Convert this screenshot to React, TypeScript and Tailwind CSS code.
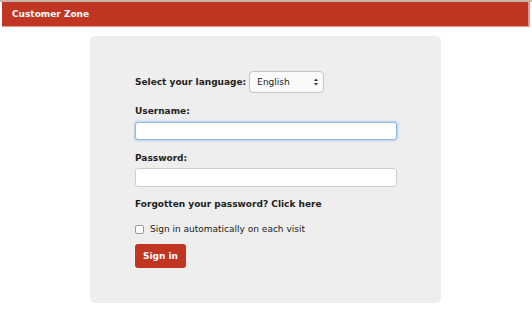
import React from 'react';

export default function App() {
  return (
    <div className="min-h-[314px] bg-white border-t-2 border-[#c8b6a6] font-['DejaVu_Sans',Verdana,sans-serif]">
      {/* Header bar */}
      <header className="mx-[2px] h-[25px] bg-[#c13523] border-b border-r-2 border-[#e59a8e] flex items-center px-[10px]">
        <span className="text-white text-[9px] font-bold leading-[12px]">Customer Zone</span>
      </header>

      {/* Login panel */}
      <div className="ml-[90px] mt-[9px] w-[351px] h-[267px] bg-[#eeeeee] rounded-[5px] pl-[45px] pt-[35px]">
        <div className="flex items-center h-[22px]">
          <label className="text-[9px] font-bold text-[#222] leading-[12px] mr-[3px]">Select your language:</label>
          <div className="w-[75px] h-[22px] bg-[#fafafa] border border-[#c4c4c4] rounded-[4px] flex items-center justify-between pl-[7px] pr-[4px]">
            <span className="text-[9px] text-[#222] leading-[12px]">English</span>
            <svg width="6" height="10" viewBox="0 0 6 10">
              <path d="M3 1.5 L5 4 H1 Z" fill="#333" />
              <path d="M3 8.5 L5 6 H1 Z" fill="#333" />
            </svg>
          </div>
        </div>

        <div className="mt-[12px] text-[9px] font-bold text-[#222] leading-[12px]">Username:</div>
        <div className="mt-[5px] w-[262px] h-[18px] bg-white border border-[#8fb8ea] rounded-[3px] shadow-[0_0_2px_1px_rgba(120,170,235,0.45)]" />

        <div className="mt-[12px] text-[9px] font-bold text-[#222] leading-[12px]">Password:</div>
        <div className="mt-[4px] w-[262px] h-[19px] bg-white border border-[#cfcfcf] rounded-[3px]" />

        <div className="mt-[11px] text-[9px] font-bold text-[#222] leading-[12px]">Forgotten your password? Click here</div>

        <div className="mt-[13px] flex items-center h-[12px]">
          <span className="w-[9px] h-[9px] bg-white border border-[#9a9a9a] rounded-[2px]" />
          <span className="ml-[6px] text-[9px] text-[#222] leading-[12px]">Sign in automatically on each visit</span>
        </div>

        <button className="mt-[9px] w-[51px] h-[24px] bg-[#c13523] rounded-[3px] text-white text-[9px] font-bold leading-[12px] flex items-center justify-center">
          Sign in
        </button>
      </div>
    </div>
  );
}
